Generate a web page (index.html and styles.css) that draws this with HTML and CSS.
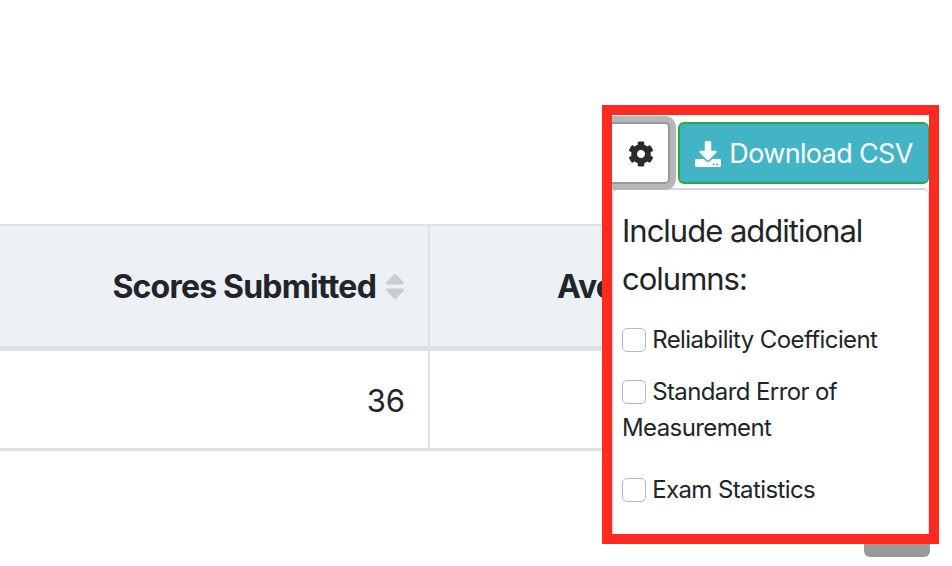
FILE: index.html

```html
<!DOCTYPE html>
<html lang="en">

<head>
    <meta charset="UTF-8">
    <meta name="viewport" content="width=device-width, initial-scale=1.0">
    <title>Grade Report</title>
    <link rel="stylesheet" href="styles.css">
</head>

<body>
    <!-- Results table -->
    <div class="results-table">
        <div class="head-cell">
            <span>Scores Submitted</span>
            <svg class="sort-icon" viewBox="0 0 320 512"><path d="M41 288h238c21.4 0 32.1 25.9 17 41L177 448c-9.4 9.4-24.6 9.4-33.9 0L24 329c-15.1-15.1-4.4-41 17-41zm255-105L177 64c-9.4-9.4-24.6-9.4-33.9 0L24 183c-15.1 15.1-4.4 41 17 41h238c21.4 0 32.1-25.9 17-41z"/></svg>
        </div>
        <div class="head-cell head-cell-last"><span>Ave</span></div>
        <div class="body-cell">36</div>
        <div class="body-cell body-cell-last"></div>
    </div>

    <!-- Button behind the highlight -->
    <div class="page-footer">
        <button class="footer-btn" type="button"></button>
    </div>

    <!-- Highlighted settings panel -->
    <div class="highlight">
        <div class="toolbar">
            <button class="settings-btn" type="button" aria-label="Settings">
                <svg class="gear-icon" viewBox="0 0 512 512"><path d="M487.4 315.7l-42.6-24.6c4.3-23.2 4.3-47 0-70.2l42.6-24.6c4.9-2.8 7.1-8.6 5.5-14-11.1-35.6-30-67.8-54.7-94.6-3.8-4.1-10-5.1-14.8-2.3L380.8 110c-17.9-15.4-38.5-27.3-60.8-35.1V25.8c0-5.6-3.9-10.5-9.4-11.7-36.7-8.2-74.3-7.8-109.2 0-5.5 1.2-9.4 6.1-9.4 11.7V75c-22.2 7.9-42.8 19.8-60.8 35.1L88.7 85.5c-4.9-2.8-11-1.9-14.8 2.3-24.7 26.7-43.6 58.9-54.7 94.6-1.7 5.4.6 11.2 5.5 14L67.3 221c-4.3 23.2-4.3 47 0 70.2l-42.6 24.6c-4.9 2.8-7.1 8.6-5.5 14 11.1 35.6 30 67.8 54.7 94.6 3.8 4.1 10 5.1 14.8 2.3l42.6-24.6c17.9 15.4 38.5 27.3 60.8 35.1v49.2c0 5.6 3.9 10.5 9.4 11.7 36.7 8.2 74.3 7.8 109.2 0 5.5-1.2 9.4-6.1 9.4-11.7v-49.2c22.2-7.9 42.8-19.8 60.8-35.1l42.6 24.6c4.9 2.8 11 1.9 14.8-2.3 24.7-26.7 43.6-58.9 54.7-94.6 1.5-5.5-.7-11.3-5.6-14.1zM256 336c-44.1 0-80-35.9-80-80s35.9-80 80-80 80 35.9 80 80-35.9 80-80 80z"/></svg>
            </button>
            <button class="download-btn" type="button">
                <svg class="download-icon" viewBox="0 0 512 512"><path d="M216 0h80c13.3 0 24 10.7 24 24v168h87.7c17.8 0 26.7 21.5 14.1 34.1L269.7 378.3c-7.5 7.5-19.8 7.5-27.3 0L90.1 226.1c-12.6-12.6-3.7-34.1 14.1-34.1H192V24c0-13.3 10.7-24 24-24zm296 376v112c0 13.3-10.7 24-24 24H24c-13.3 0-24-10.7-24-24V376c0-13.3 10.7-24 24-24h146.7l49 49c20.1 20.1 52.5 20.1 72.6 0l49-49H488c13.3 0 24 10.7 24 24zm-124 88c0-11-9-20-20-20s-20 9-20 20 9 20 20 20 20-9 20-20zm64 0c0-11-9-20-20-20s-20 9-20 20 9 20 20 20 20-9 20-20z"/></svg>
                Download CSV
            </button>
        </div>
        <div class="columns-menu">
            <h4>Include additional columns:</h4>
            <label class="column-option"><input type="checkbox"> Reliability Coefficient</label>
            <label class="column-option column-option-wrapped"><input type="checkbox"> Standard Error of Measurement</label>
            <label class="column-option"><input type="checkbox"> Exam Statistics</label>
        </div>
    </div>
</body>

</html>
```

FILE: styles.css

```css
* {
    margin: 0;
    padding: 0;
    box-sizing: border-box;
}

body {
    font-family: 'Inter', 'Liberation Sans', sans-serif;
    background-color: #fff;
    color: #212529;
    height: 566px;
    overflow: hidden;
    padding-top: 224px;
    position: relative;
}

.results-table {
    display: grid;
    grid-template-columns: 430px 172px;
    grid-template-rows: 125px 97px;
    width: 602px;
    border-top: 2px solid #dfe2e5;
    border-bottom: 3px solid #dfe2e5;
}

.head-cell {
    display: flex;
    align-items: center;
    justify-content: flex-end;
    gap: 9px;
    padding-right: 23px;
    background-color: #ecf1f5;
    border-right: 2px solid #dfe2e5;
    border-bottom: 5px solid #dfe2e5;
    font-size: 32px;
    font-weight: 700;
    letter-spacing: -0.8px;
    white-space: nowrap;
}

.head-cell-last {
    justify-content: flex-start;
    padding-left: 127px;
    padding-right: 0;
    border-right: none;
}

.sort-icon {
    width: 20px;
    height: 33px;
    fill: #ccc;
}

.body-cell {
    display: flex;
    align-items: center;
    justify-content: flex-end;
    padding: 1px 23px 0 0;
    border-right: 2px solid #dfe2e5;
    font-size: 31px;
}

.body-cell-last {
    border-right: none;
}

.page-footer {
    display: flex;
    justify-content: flex-end;
    margin-top: 66px;
    padding-right: 22px;
}

.footer-btn {
    width: 66px;
    height: 40px;
    background-color: #999;
    border: none;
    border-radius: 6px;
}

/* red box drawn over the page */
.highlight {
    position: absolute;
    top: 105px;
    left: 602px;
    width: 337px;
    height: 439px;
    border: 10px solid #ff2a1f;
    background-color: #fff;
}

.toolbar {
    display: flex;
    gap: 8px;
    padding-top: 7px;
}

.settings-btn {
    display: flex;
    align-items: center;
    justify-content: center;
    width: 58px;
    height: 62px;
    padding: 2px 0 0 1px;
    background-color: #fff;
    border: 2px solid #999;
    border-left: none;
    border-radius: 0 5px 5px 0;
    box-shadow: 0 0 0 6px #b5b8bb;
    clip-path: inset(-7px -7px -7px 0);
}

.gear-icon {
    width: 26px;
    height: 26px;
    fill: #2b2b2b;
}

.download-btn {
    display: flex;
    align-items: center;
    justify-content: center;
    gap: 8px;
    flex: 1;
    height: 62px;
    padding-top: 1px;
    background-color: #43b3c6;
    border: 2px solid #28a745;
    border-right-width: 1px;
    border-radius: 6px;
    color: #fff;
    font-family: inherit;
    font-size: 27px;
    letter-spacing: -0.65px;
}

.download-icon {
    width: 26px;
    height: 26px;
    fill: #fff;
}

.columns-menu {
    margin-top: 4px;
    height: 346px;
    padding: 17px 9px 0;
    border: 1px solid #d5d8db;
    border-top-width: 2px;
    border-bottom: none;
    border-radius: 6px 6px 0 0;
}

.columns-menu h4 {
    font-size: 31px;
    font-weight: 400;
    line-height: 48px;
    letter-spacing: -1px;
    margin-bottom: 19px;
}

.column-option {
    display: block;
    font-size: 24px;
    line-height: 36px;
    letter-spacing: -0.6px;
    margin-bottom: 16px;
}

.column-option-wrapped {
    margin-bottom: 26px;
}

.column-option input {
    appearance: none;
    width: 24px;
    height: 24px;
    margin-right: 0;
    vertical-align: -4px;
    background-color: #fff;
    border: 1px solid #b8b8b8;
    border-radius: 5px;
}
```
